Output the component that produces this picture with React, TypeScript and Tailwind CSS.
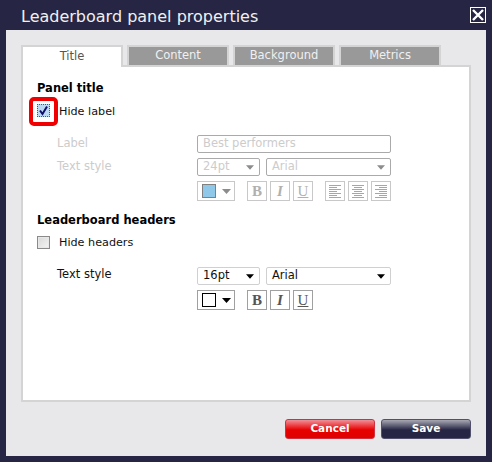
import React from "react";

const font = { fontFamily: '"DejaVu Sans", sans-serif' };

function Tab({ label, active }: { label: string; active?: boolean }) {
  return active ? (
    <div className="relative z-10 -mb-[2px] flex h-[22px] w-[102px] items-center justify-center border-2 border-b-0 border-[#d4d4d4] bg-white text-[11.5px] text-[#555]">
      {label}
    </div>
  ) : (
    <div className="flex h-[20px] w-[102px] items-center justify-center border-2 border-b-0 border-[#d4d4d4] bg-[#999999] text-[11.5px] text-[#f0f0f0]">
      {label}
    </div>
  );
}

function Caret({ disabled, w = 9 }: { disabled?: boolean; w?: number }) {
  return (
    <svg width={w} height="5" viewBox="0 0 9 5" className="shrink-0">
      <path d="M0 0H9L4.5 5Z" fill={disabled ? "#8c8c8c" : "#000"} />
    </svg>
  );
}

function Select({ value, className, disabled }: { value: string; className: string; disabled?: boolean }) {
  return (
    <div
      className={`flex h-[18px] items-center justify-between rounded-[2px] border pl-[5px] pr-[5px] text-[11.5px] ${className} ${
        disabled ? "border-[#aaaaaa] text-[#cccccc]" : "border-[#d0d0d0] text-[#111]"
      }`}
    >
      <span>{value}</span>
      <Caret disabled={disabled} w={8} />
    </div>
  );
}

function IconBtn({ children, disabled }: { children: React.ReactNode; disabled?: boolean }) {
  return (
    <div
      className={`flex h-[20px] w-[20px] items-center justify-center border ${
        disabled ? "border-[#c8c8c8]" : "border-[#a0a0a0]"
      }`}
    >
      {children}
    </div>
  );
}

function FormatLetter({ t, cls, disabled }: { t: string; cls: string; disabled?: boolean }) {
  return (
    <span
      className={`text-[15px] leading-none ${cls} ${disabled ? "text-[#b0b0b0]" : "text-[#555]"}`}
      style={{ fontFamily: '"Liberation Serif", serif' }}
    >
      {t}
    </span>
  );
}

function Align({ kind }: { kind: "left" | "center" | "right" }) {
  const rows = [12, 8, 12, 8, 12, 8, 12];
  return (
    <svg width="12" height="13" viewBox="0 0 12 13">
      {rows.map((w, i) => {
        const x = kind === "left" ? 0 : kind === "center" ? (12 - w) / 2 : 12 - w;
        return <rect key={i} x={x} y={i * 2} width={w} height="1" fill="#a6a6a6" />;
      })}
    </svg>
  );
}

function Toolbar({ swatch, disabled, aligns }: { swatch: string; disabled?: boolean; aligns?: boolean }) {
  return (
    <div className="flex">
      <div
        className={`flex h-[20px] w-[38px] items-center gap-[6px] border pl-[4px] ${
          disabled ? "border-[#c8c8c8]" : "border-[#a0a0a0]"
        }`}
      >
        <div className={`h-[14px] w-[14px] border ${disabled ? "border-[#808080]" : "border-black"}`} style={{ backgroundColor: swatch }} />
        <Caret disabled={disabled} />
      </div>
      <div className="ml-[12px] flex gap-[3px]">
        <IconBtn disabled={disabled}><FormatLetter t="B" cls="font-bold" disabled={disabled} /></IconBtn>
        <IconBtn disabled={disabled}><FormatLetter t="I" cls="font-bold italic" disabled={disabled} /></IconBtn>
        <IconBtn disabled={disabled}><FormatLetter t="U" cls="underline" disabled={disabled} /></IconBtn>
      </div>
      {aligns && (
        <div className="ml-[12px] flex gap-[3px]">
          <IconBtn disabled={disabled}><Align kind="left" /></IconBtn>
          <IconBtn disabled={disabled}><Align kind="center" /></IconBtn>
          <IconBtn disabled={disabled}><Align kind="right" /></IconBtn>
        </div>
      )}
    </div>
  );
}

function Heading({ children }: { children: React.ReactNode }) {
  return <div className="h-[14px] text-[11.5px] font-bold leading-[14px] text-black">{children}</div>;
}

export default function App() {
  return (
    <div className="flex h-[462px] w-[492px] flex-col bg-[#262644] px-[6px] pb-[6px]" style={font}>
      <div className="flex h-[30px] shrink-0 items-center justify-between pl-[15px]">
        <span className="pt-[4px] text-[16px] leading-none text-[#f0f0f0]">Leaderboard panel properties</span>
        <div className="flex h-[16px] w-[16px] items-center justify-center border border-white">
          <svg width="12" height="12" viewBox="0 0 12 12">
            <path d="M1 1L11 11M11 1L1 11" stroke="#fff" strokeWidth="2.4" />
          </svg>
        </div>
      </div>

      <div className="flex flex-1 flex-col bg-[#e8e8ea] px-[15px] pt-[15px]">
        <div className="flex h-[20px] gap-[4px]">
          <Tab label="Title" active />
          <Tab label="Content" />
          <Tab label="Background" />
          <Tab label="Metrics" />
        </div>

        <div className="relative h-[337px] border-2 border-[#d4d4d4] bg-white pl-[14px] pt-[14px]">
          <Heading>Panel title</Heading>

          <div className="relative mt-[9px] flex h-[13px] items-center">
            <div className="flex h-[13px] w-[13px] items-center justify-center border border-dotted border-[#3b5b86] bg-[#bcd9f2]">
              <svg width="11" height="11" viewBox="0 0 11 11">
                <path d="M2 5.5L4.5 9L9 1.5" fill="none" stroke="#10106a" strokeWidth="2" />
              </svg>
            </div>
            <span className="ml-[9px] pt-[4px] text-[11.2px] text-[#111]">Hide label</span>
            <div className="absolute -left-[8px] -top-[7px] h-[29px] w-[29px] rounded-[5px] border-[4px] border-[#f00000]" />
          </div>

          <div className="mt-[18px] flex h-[18px] pl-[20px]">
            <span className="w-[140px] text-[11.5px] leading-[17px] text-[#cccccc]">Label</span>
            <div className="flex w-[194px] items-center rounded-[2px] border border-[#aaaaaa] pl-[5px] text-[11.5px] text-[#cccccc]">
              Best performers
            </div>
          </div>

          <div className="mt-[5px] flex pl-[20px]">
            <span className="w-[140px] text-[11.5px] leading-[16px] text-[#cccccc]">Text style</span>
            <div className="w-[194px]">
              <div className="flex justify-between">
                <Select value="24pt" className="w-[63px]" disabled />
                <Select value="Arial" className="w-[125px]" disabled />
              </div>
              <div className="mt-[5px]">
                <Toolbar swatch="#8fc8e8" disabled aligns />
              </div>
            </div>
          </div>

          <div className="mt-[12px]">
            <Heading>Leaderboard headers</Heading>
          </div>

          <div className="mt-[9px] flex h-[13px] items-center">
            <div className="h-[13px] w-[13px] border border-[#8a8a8a] bg-[linear-gradient(135deg,#d8d8d8,#f4f4f4)] shadow-[inset_0_0_0_1px_#e8e8e8]" />
            <span className="ml-[9px] pt-[2px] text-[11.2px] text-[#111]">Hide headers</span>
          </div>

          <div className="mt-[18px] flex pl-[20px]">
            <span className="w-[140px] text-[11.5px] leading-[15px] text-[#111]">Text style</span>
            <div className="w-[194px]">
              <div className="flex justify-between">
                <Select value="16pt" className="w-[63px]" />
                <Select value="Arial" className="w-[125px]" />
              </div>
              <div className="mt-[5px]">
                <Toolbar swatch="#ffffff" />
              </div>
            </div>
          </div>
        </div>

        <div className="mt-[17px] flex justify-end gap-[6px]">
          <div className="flex h-[20px] w-[90px] items-center justify-center rounded-[3px] border border-[#d03040] bg-[linear-gradient(#f09098,#e80000_55%,#e00000)] text-[10.5px] font-bold text-white">
            Cancel
          </div>
          <div className="flex h-[20px] w-[90px] items-center justify-center rounded-[3px] border border-[#50506a] bg-[linear-gradient(#a8a8b4,#262644_55%,#262644)] text-[10.5px] font-bold text-white">
            Save
          </div>
        </div>
      </div>
    </div>
  );
}
